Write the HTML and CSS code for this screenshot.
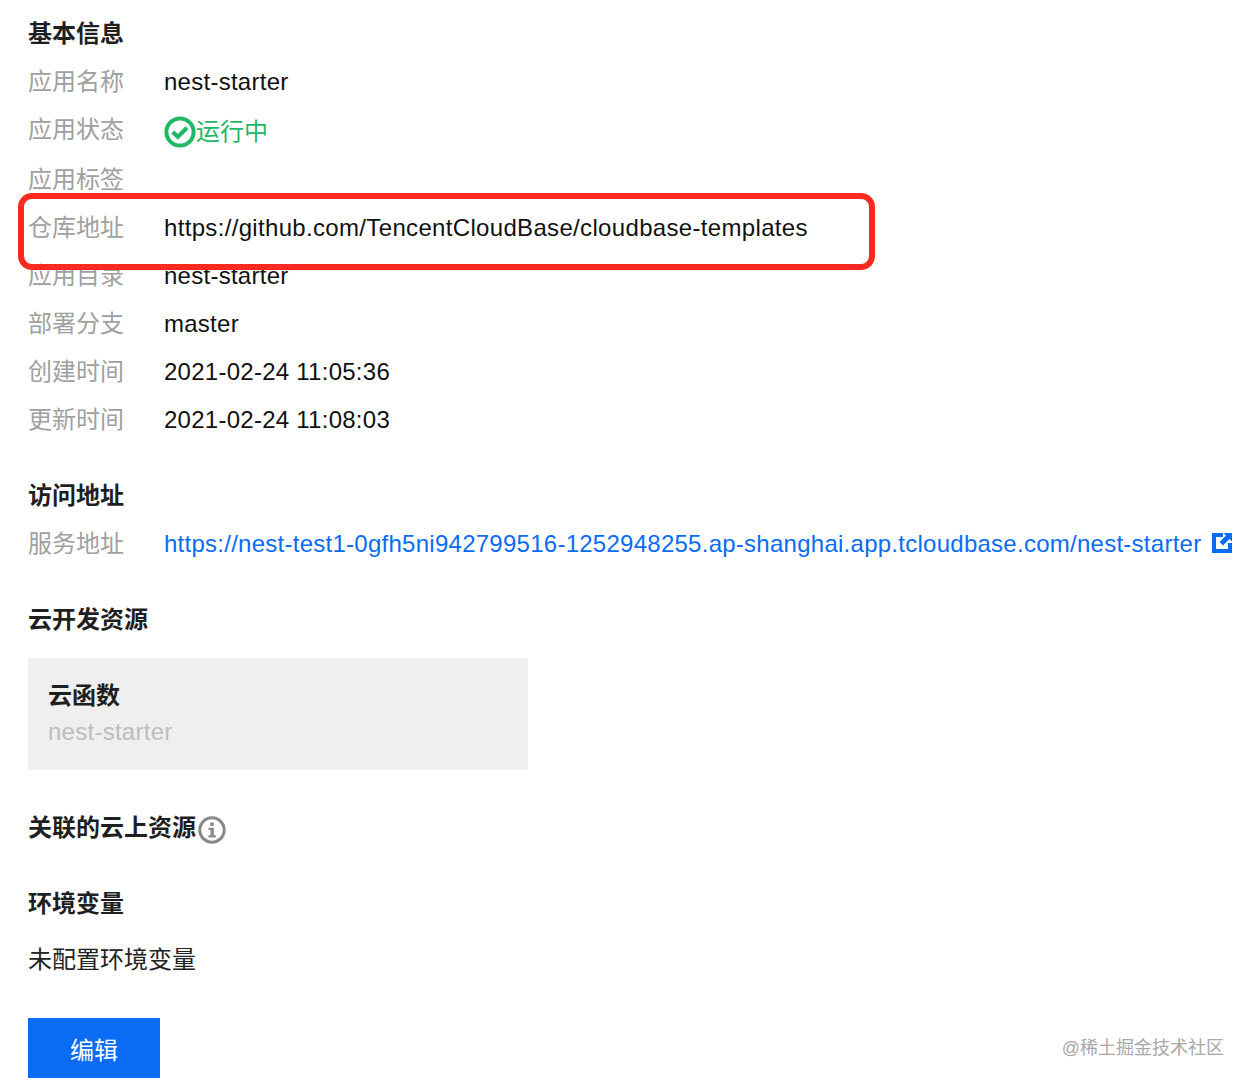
FILE: index.html
```html
<!DOCTYPE html>
<html lang="zh-CN">
<head>
    <meta charset="UTF-8">
    <title>应用详情</title>
    <link rel="stylesheet" href="styles.css">
</head>
<body>
    <div class="page">
        <h2 class="section-title">基本信息</h2>
        <div class="info-row"><span class="info-label">应用名称</span><span class="info-value">nest-starter</span></div>
        <div class="info-row status-row"><span class="info-label">应用状态</span>
            <span class="status">
                <svg class="status-icon" viewBox="0 0 32 32" width="32" height="32">
                    <circle cx="16" cy="16" r="13.6" fill="none" stroke="#1fb866" stroke-width="4"/>
                    <path d="M8.8 16l5 4.8 9.2-9" fill="none" stroke="#1fb866" stroke-width="4.2"/>
                </svg>运行中
            </span>
        </div>
        <div class="info-row tags-row"><span class="info-label">应用标签</span></div>
        <div class="info-row"><span class="info-label">仓库地址</span><span class="info-value repo">https://github.com/TencentCloudBase/cloudbase-templates</span></div>
        <div class="info-row"><span class="info-label">应用目录</span><span class="info-value">nest-starter</span></div>
        <div class="info-row"><span class="info-label">部署分支</span><span class="info-value">master</span></div>
        <div class="info-row"><span class="info-label">创建时间</span><span class="info-value">2021-02-24 11:05:36</span></div>
        <div class="info-row"><span class="info-label">更新时间</span><span class="info-value">2021-02-24 11:08:03</span></div>

        <h2 class="section-title spaced">访问地址</h2>
        <div class="info-row"><span class="info-label">服务地址</span>
            <span class="info-value link">https://nest-test1-0gfh5ni942799516-1252948255.ap-shanghai.app.tcloudbase.com/nest-starter
                <svg class="link-icon" viewBox="0 0 20 20" width="20" height="20">
                    <path d="M0 0h11v4H4v12h12v-6h4v10H0z" fill="#0a6cf5"/>
                    <path d="M11.500 0H20v8.500l-2.600-2.600-6.400 6.600-3.500-3.500 6.500-6.400z" fill="#0a6cf5"/>
                </svg>
            </span>
        </div>

        <h2 class="section-title spaced">云开发资源</h2>
        <div class="resource-card">
            <div class="resource-name">云函数</div>
            <div class="resource-sub">nest-starter</div>
        </div>

        <h2 class="section-title related">关联的云上资源
            <svg class="info-icon" viewBox="0 0 28 28" width="28" height="28">
                <circle cx="14" cy="14" r="12.2" fill="none" stroke="#888" stroke-width="3"/>
                <rect x="12.2" y="6.500" width="3.600" height="3.400" fill="#888"/>
                <path d="M10.500 11.800h5.300v7.400h2v2.300h-7.300v-2.300h2v-5.100h-2z" fill="#888"/>
            </svg>
        </h2>

        <h2 class="section-title spaced">环境变量</h2>
        <p class="empty-text">未配置环境变量</p>

        <button type="button" class="edit-btn">编辑</button>
    </div>

    <div class="highlight-box"></div>
    <div class="watermark">@稀土掘金技术社区</div>
</body>
</html>
```

FILE: styles.css
```css
* {
    margin: 0;
    padding: 0;
    box-sizing: border-box;
}

body {
    font-family: "Liberation Sans", "Noto Sans CJK SC", sans-serif;
    font-size: 24px;
    background: #fff;
    color: #000;
    position: relative;
    height: 1086px;
    overflow: hidden;
}

.page {
    padding: 10px 0 0 28px;
}

.section-title {
    font-size: 24px;
    font-weight: 700;
    line-height: 48px;
    color: #1f1f1f;
}

.section-title.spaced {
    margin-top: 28px;
}

.section-title.related {
    display: flex;
    align-items: center;
    margin-top: 34px;
}

.info-row {
    display: flex;
    height: 48px;
    line-height: 48px;
}

.status-row {
    height: 49px;
}

.tags-row {
    height: 49px;
    line-height: 50px;
}

.info-label {
    width: 136px;
    flex-shrink: 0;
    color: #a0a0a0;
}

.info-value {
    white-space: nowrap;
    color: #111;
    letter-spacing: 0.26px;
}

.info-value.repo {
    letter-spacing: 0.33px;
}

.status {
    display: flex;
    align-items: center;
    margin-top: 2px;
    color: #1fb866;
}

.status-icon {
    margin-top: 1px;
}

.info-value.link {
    color: #0a6cf5;
}

.link-icon {
    margin-left: 4px;
    vertical-align: -1px;
}

.resource-card {
    width: 500px;
    height: 112px;
    margin-top: 14px;
    padding: 20px 20px 0;
    background: #efefef;
}

.resource-name {
    font-weight: 700;
    line-height: 36px;
    color: #1f1f1f;
}

.resource-sub {
    line-height: 36px;
    color: #bdbdbd;
    letter-spacing: 0.26px;
}

.info-icon {
    margin: 3px 0 0 2px;
}

.empty-text {
    margin-top: 8px;
    line-height: 48px;
    color: #222;
}

.edit-btn {
    display: block;
    width: 132px;
    height: 60px;
    margin-top: 34px;
    border: none;
    background: #0a6cf5;
    color: #fff;
    font: inherit;
}

.highlight-box {
    position: absolute;
    left: 18px;
    top: 193px;
    width: 857px;
    height: 77px;
    border: 6px solid #fb2a20;
    border-radius: 14px;
}

.watermark {
    position: absolute;
    right: 28px;
    top: 1036px;
    font-size: 18px;
    line-height: 24px;
    color: #a8a8a8;
}
```
